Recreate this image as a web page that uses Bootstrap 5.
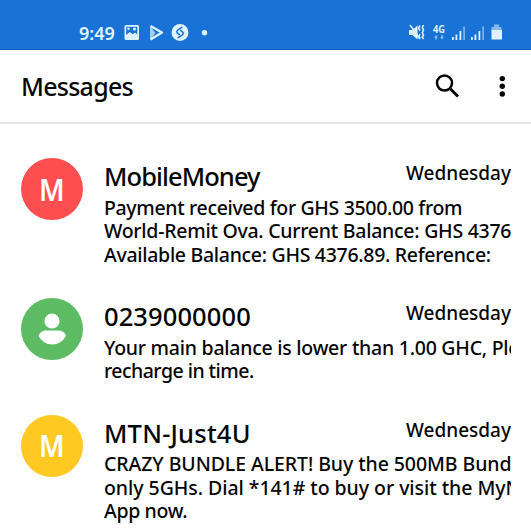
<!DOCTYPE html>
<html lang="en">
<head>
<meta charset="utf-8">
<meta name="viewport" content="width=device-width, initial-scale=1">
<title>Messages</title>
<link href="https://cdn.jsdelivr.net/npm/bootstrap@5.3.0/dist/css/bootstrap.min.css" rel="stylesheet">
<style>
body{font-family:"Noto Sans","Open Sans",sans-serif;background:#fff;color:#050505;overflow:hidden;height:531px}
.status{height:50px;background:#1973d6;border-bottom:1px solid #1565b8;color:#dff2ff;padding:16px 29px 0 79px}
.clock{font-size:18px;line-height:34px;font-weight:600;width:44px;white-space:nowrap}
.status svg,.topbar svg,.avatar svg{display:block;flex:none}
.topbar{height:74px;border-bottom:2px solid #e6e5ea;padding:0 23px 0 21px}
.topbar h1{font-size:25px;line-height:34px;font-weight:500;margin:0;letter-spacing:-.75px}
.inbox{padding:34px 20px 0 21px}
.thread{gap:21px}
.thread-3{height:140px}
.thread-2{height:116.5px}
.avatar{width:62px;height:62px;color:#fff;font-size:30px;font-weight:600}
.avatar span{transform:scaleX(.92)}
.red{background:#fd4f50}.green{background:#5dbb63}.yellow{background:#fec923}
.name{font-size:25.5px;line-height:36px;font-weight:500;margin-bottom:1.5px}
.day{font-size:19px;line-height:30px;font-weight:500}
.line{display:block;font-size:19.5px;line-height:23.5px;font-weight:500;white-space:nowrap}
.n1{letter-spacing:-.92px}.n2{letter-spacing:.1px}.n3{letter-spacing:.2px}
.a1{letter-spacing:-.34px}.a2{letter-spacing:-.26px}.a3{letter-spacing:-.3px}
.b1{letter-spacing:-.25px}.b2{letter-spacing:-.53px}
.c1{letter-spacing:-.08px}.c2{letter-spacing:-.05px}.c3{letter-spacing:-.35px}
</style>
</head>
<body>
<header>
<div class="status d-flex justify-content-between">
 <div class="d-flex align-items-center">
  <span class="clock">9:49</span>
  <svg width="86" height="34" viewBox="0 0 86 34" fill="#dff2ff">
   <path fill-rule="evenodd" d="M3 9h11.500a1.500 1.500 0 0 1 1.500 1.500v12a1.500 1.500 0 0 1-1.500 1.500H3a1.500 1.500 0 0 1-1.500-1.500v-12A1.500 1.500 0 0 1 3 9zm.2 1.700v8.300l3.500-3 3 2.200 2.300-1.700 2.300 2v-7.800z"/>
   <circle cx="5.500" cy="12.700" r="1.200"/><circle cx="11.500" cy="13" r="1.500"/>
   <path d="M27 10v14l5.500-7z" opacity=".7"/>
   <path d="M27.500 10l11.500 6.500-11.500 7" fill="none" stroke="#dff2ff" stroke-width="2.300" stroke-linejoin="round"/>
   <circle cx="57" cy="16.500" r="8.500"/>
   <path d="M58.800 11.300l-4 2.700q-2 1.700 0 3.300l1.700 1.300M55.200 21.700l4-2.700q2-1.700 0-3.300l-1.700-1.300" fill="none" stroke="#1973d6" stroke-width="1.500" stroke-linecap="round"/>
   <circle cx="81.500" cy="16.800" r="2.700"/>
  </svg>
 </div>
 <svg width="94" height="34" viewBox="408 16 94 34" fill="#dff2ff">
  <path d="M409 30h3.500l5-4.500v14l-5-4.500H409z"/><path d="M410 25l10 14" stroke="#dff2ff" stroke-width="1.600"/>
  <path d="M420 25.500l-1.500 2.500 1.500 2.500M420 34l-1 2 1 2.500M423.500 25l-1.200 2.500 1.200 2.500-1.200 2.500 1.200 2.500-1.200 2 1.200 2" fill="none" stroke="#dff2ff" stroke-width="1.500"/>
  <text x="433" y="32.500" font-size="10" font-weight="700" textLength="12" lengthAdjust="spacingAndGlyphs">4G</text>
  <path d="M434 37.500l2-2.500 2 2.500h-1.200v2h-1.600v-2zM440 37l2 2.500 2-2.500h-1.200v-2h-1.600v2z" opacity=".55"/>
  <path d="M452 37h1.800v3H452zM455.500 34.500h1.800V40h-1.800zM459.500 31h1.800v9h-1.800zM471 37h1.800v3H471zM474.500 34.500h1.800V40h-1.800zM478.500 31h1.800v9h-1.800z"/>
  <path d="M463.300 26.500h1.600V40h-1.600zM482.300 26.500h1.600V40h-1.600z" opacity=".55"/>
  <path d="M494 24.500h5V27h2.500v4h-10v-4h2.500z" opacity=".55"/><path d="M491.500 30H502v9.500h-10.500z"/>
 </svg>
</div>
<nav class="topbar d-flex align-items-center justify-content-between">
 <h1>Messages</h1>
 <svg width="84" height="34" viewBox="424 69 84 34">
  <circle cx="444.500" cy="83" r="7.500" fill="none" stroke="#050505" stroke-width="2.500"/><path d="M450 88.500l8 8" stroke="#050505" stroke-width="3"/>
  <g fill="#050505"><circle cx="502.300" cy="78.600" r="2.700"/><circle cx="502.300" cy="86.300" r="2.700"/><circle cx="502.300" cy="94" r="2.700"/></g>
 </svg>
</nav>
</header>
<main class="inbox">
 <article class="thread thread-3 d-flex">
  <div class="avatar red rounded-circle d-flex flex-shrink-0 align-items-center justify-content-center"><span>M</span></div>
  <div class="flex-grow-1 overflow-hidden">
   <div class="d-flex justify-content-between"><span class="name n1">MobileMoney</span><span class="day">Wednesday</span></div>
   <span class="line a1">Payment received for GHS 3500.00 from</span>
   <span class="line a2">World-Remit Ova. Current Balance: GHS 4376</span>
   <span class="line a3">Available Balance: GHS 4376.89. Reference:</span>
  </div>
 </article>
 <article class="thread thread-2 d-flex">
  <div class="avatar green rounded-circle d-flex flex-shrink-0">
   <svg width="62" height="62" viewBox="0 0 62 62" fill="#fff"><circle cx="31" cy="23" r="7.600"/><path d="M17.500 38C19 34 22 32.500 25 32.500h12.500C41 32.500 43.500 34 45 38 42 43 37 46.500 31.200 46.500S20.500 43 17.500 38z"/></svg>
  </div>
  <div class="flex-grow-1 overflow-hidden">
   <div class="d-flex justify-content-between"><span class="name n2">0239000000</span><span class="day">Wednesday</span></div>
   <span class="line b1">Your main balance is lower than 1.00 GHC, Ple</span>
   <span class="line b2">recharge in time.</span>
  </div>
 </article>
 <article class="thread d-flex">
  <div class="avatar yellow rounded-circle d-flex flex-shrink-0 align-items-center justify-content-center"><span>M</span></div>
  <div class="flex-grow-1 overflow-hidden">
   <div class="d-flex justify-content-between"><span class="name n3">MTN-Just4U</span><span class="day">Wednesday</span></div>
   <span class="line c1">CRAZY BUNDLE ALERT! Buy the 500MB Bund</span>
   <span class="line c2">only 5GHs. Dial *141# to buy or visit the MyN</span>
   <span class="line c3">App now.</span>
  </div>
 </article>
</main>
<script src="https://cdn.jsdelivr.net/npm/bootstrap@5.3.0/dist/js/bootstrap.bundle.min.js"></script>
</body>
</html>
